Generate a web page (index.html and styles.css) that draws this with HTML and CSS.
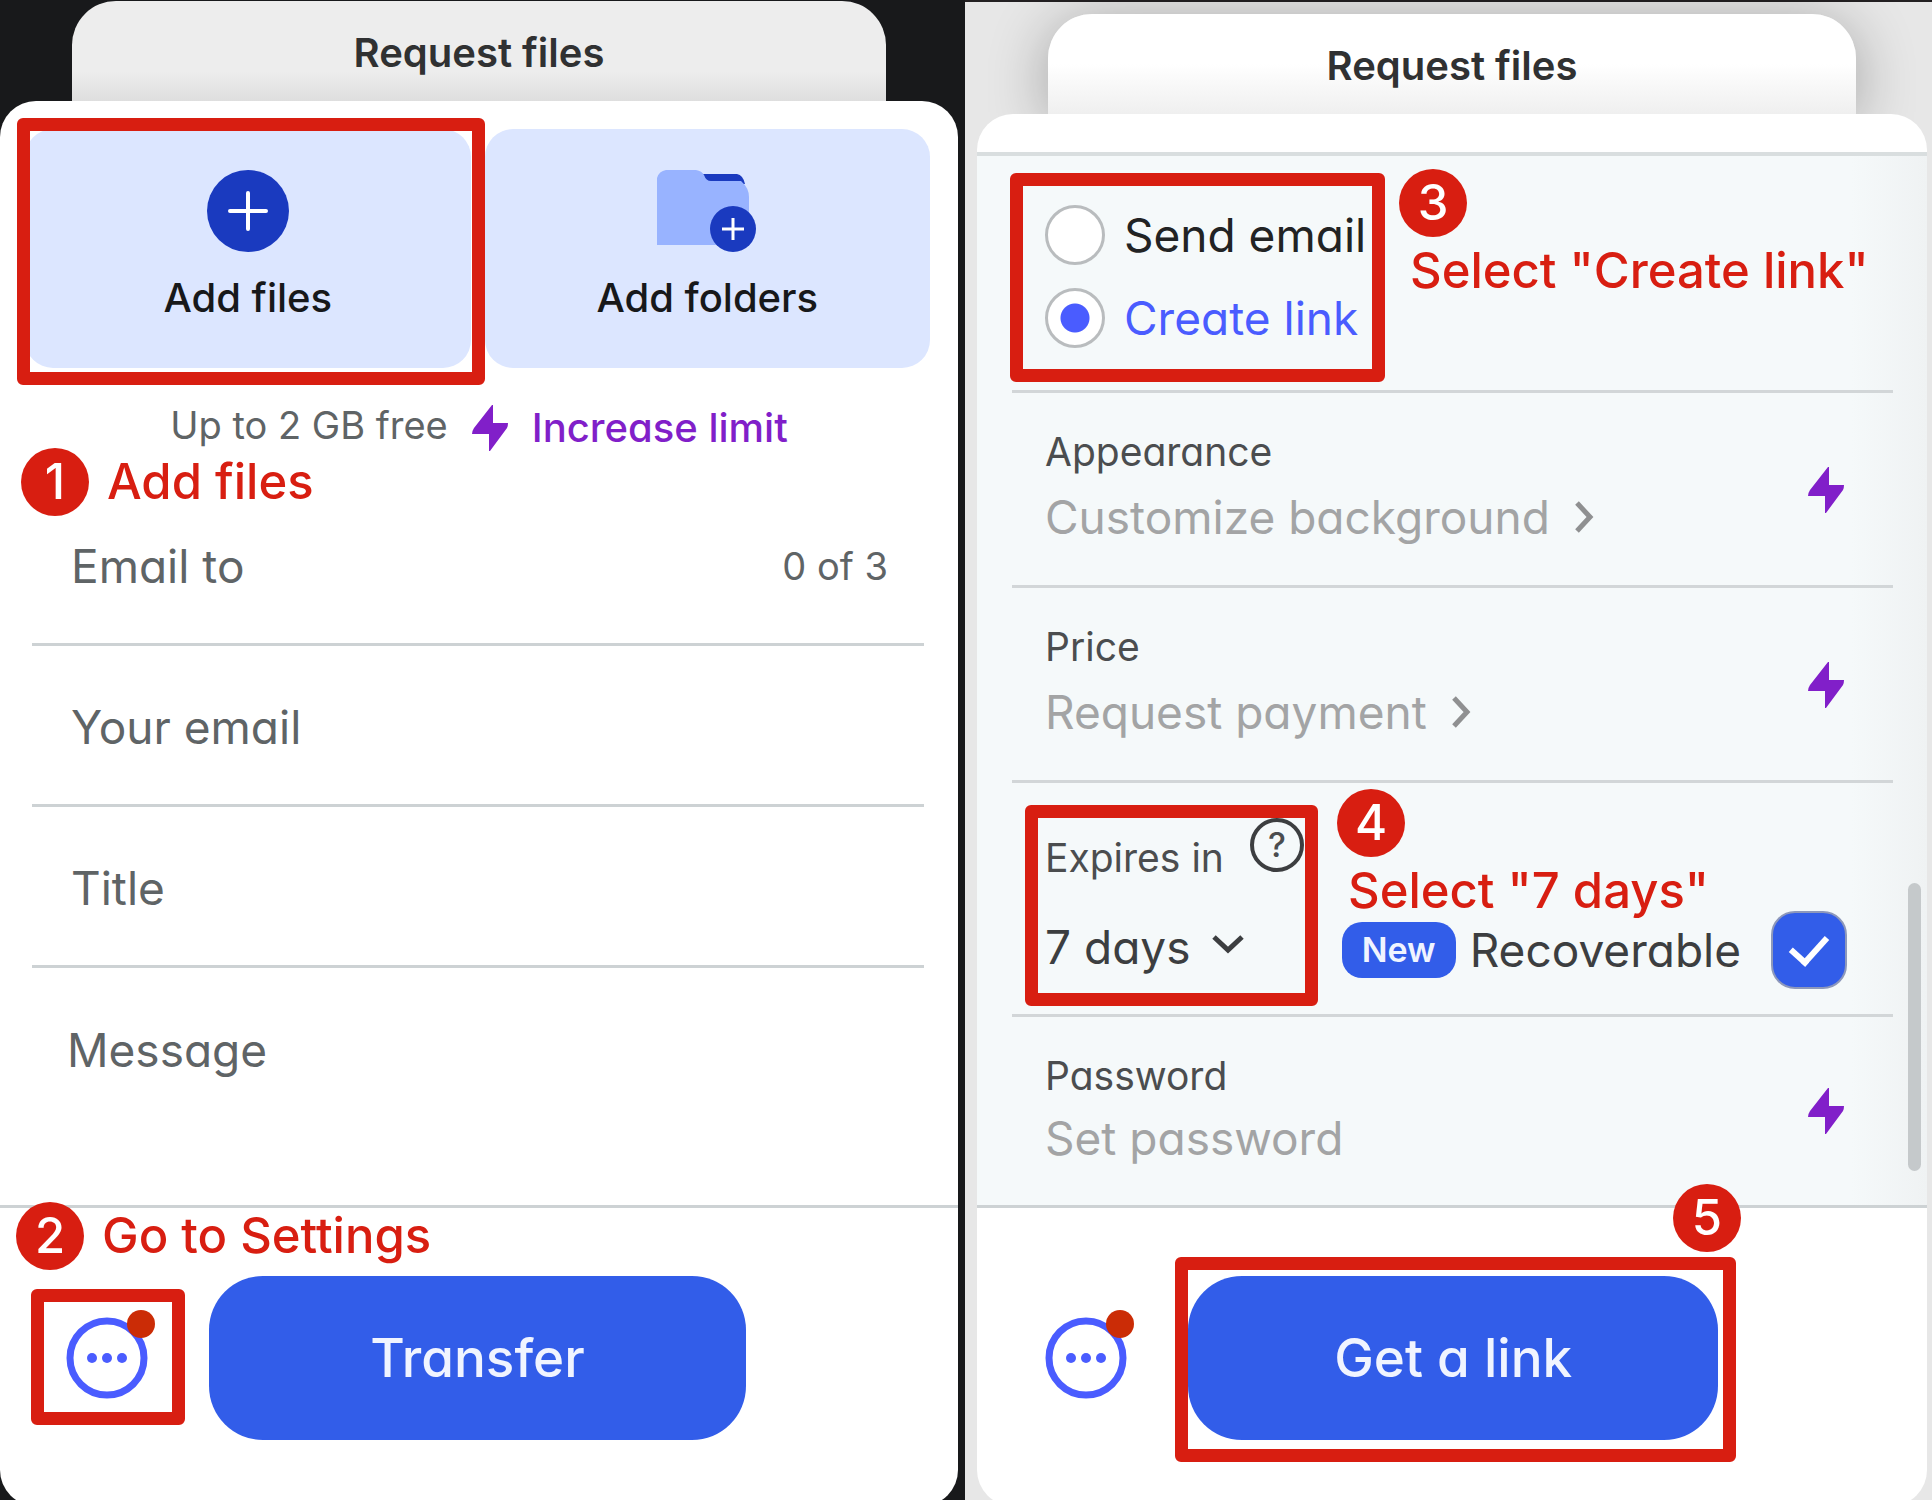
FILE: index.html
```html
<!DOCTYPE html>
<html lang="en">
<head>
  <meta charset="UTF-8" />
  <meta name="viewport" content="width=device-width, initial-scale=1" />
  <title>Request files</title>
  <link rel="stylesheet" href="styles.css">
</head>
<body>
  <svg class="sprite" aria-hidden="true">
    <symbol id="bolt" viewBox="0 0 36 46">
      <path d="M21 0 L21 18 L36 18 Q36 21 35 23 L18 46 L17 46 L17 29 L0 29 Q0 26 2 23 L20 0 Z" />
    </symbol>
    <symbol id="more" viewBox="0 0 82 82">
      <circle cx="41" cy="41" r="37" fill="none" stroke="currentColor" stroke-width="7" />
      <circle cx="26" cy="41" r="5" /><circle cx="41" cy="41" r="5" /><circle cx="56" cy="41" r="5" />
    </symbol>
    <symbol id="chevron" viewBox="0 0 20 34">
      <path d="M3 3 L16 17 L3 31" fill="none" stroke="currentColor" stroke-width="5" />
    </symbol>
  </svg>

  <main class="screens">
    <!-- Add files screen -->
    <section class="screen screen-dark">
      <h1 class="tab">Request files</h1>
      <div class="sheet">
        <div class="uploads">
          <button class="upload">
            <svg class="upload-icon" width="82" height="82" viewBox="0 0 82 82">
              <circle cx="41" cy="41" r="41" fill="#1a3abf" />
              <path d="M41 23 V59 M23 41 H59" stroke="#fff" stroke-width="4" stroke-linecap="round" />
            </svg>
            Add files
            <span class="highlight highlight-upload"></span>
          </button>
          <button class="upload">
            <svg class="upload-icon" width="100" height="82" viewBox="0 0 100 82">
              <path d="M44 4 H80 Q86 5 88 14 H50 Z" fill="#1a3abf" />
              <path d="M0 8 Q2 1 9 0 H39 Q45 1 47 5 Q49 11 54 11 H84 Q92 18 92 27 V75 H0 Z" fill="#98b3ff" />
              <circle cx="76" cy="59" r="23" fill="#1a3abf" />
              <path d="M76 48 V70 M65 59 H87" stroke="#fff" stroke-width="3" />
            </svg>
            Add folders
          </button>
        </div>

        <div class="limit">
          <span>Up to 2 GB free</span>
          <a href="#"><svg class="bolt"><use href="#bolt" /></svg>Increase limit</a>
          <div class="step step-1"><b>1</b><span>Add files</span></div>
        </div>

        <form class="fields">
          <div class="field">
            <input type="text" placeholder="Email to" aria-label="Email to">
            <span class="count">0 of 3</span>
          </div>
          <div class="field"><input type="email" placeholder="Your email" aria-label="Your email"></div>
          <div class="field"><input type="text" placeholder="Title" aria-label="Title"></div>
          <textarea placeholder="Message" aria-label="Message"></textarea>
        </form>

        <footer class="actions">
          <button class="more" aria-label="Settings">
            <svg><use href="#more" /></svg>
            <span class="dot"></span>
            <span class="highlight highlight-more"></span>
          </button>
          <button class="submit">Transfer</button>
          <div class="step step-2"><b>2</b><span>Go to Settings</span></div>
        </footer>
      </div>
    </section>

    <!-- Settings screen -->
    <section class="screen screen-light">
      <h1 class="tab">Request files</h1>
      <div class="sheet">
        <form class="settings">
          <div class="setting delivery">
            <label><input type="radio" name="delivery">Send email</label>
            <label><input type="radio" name="delivery" checked>Create link</label>
            <span class="highlight highlight-delivery"></span>
            <div class="step step-stacked step-3"><b>3</b><span>Select "Create link"</span></div>
          </div>
          <div class="setting">
            <div>
              <h2>Appearance</h2>
              <button type="button" class="value">Customize background<svg><use href="#chevron" /></svg></button>
            </div>
            <svg class="bolt"><use href="#bolt" /></svg>
          </div>
          <div class="setting">
            <div>
              <h2>Price</h2>
              <button type="button" class="value">Request payment<svg><use href="#chevron" /></svg></button>
            </div>
            <svg class="bolt"><use href="#bolt" /></svg>
          </div>
          <div class="setting expiry">
            <div>
              <div class="expiry-label">
                <label for="expires">Expires in</label>
                <span class="help">?</span>
              </div>
              <div class="picker">
                <select id="expires">
                  <option>7 days</option>
                </select>
                <svg viewBox="0 0 34 22"><path d="M3 4 L17 17 L31 4" /></svg>
              </div>
            </div>
            <div class="recoverable">
              <span class="new">New</span>
              <label for="recoverable">Recoverable</label>
              <input type="checkbox" id="recoverable" checked>
            </div>
            <span class="highlight highlight-expiry"></span>
            <div class="step step-stacked step-4"><b>4</b><span>Select "7 days"</span></div>
          </div>
          <div class="setting password">
            <div>
              <h2><label for="password">Password</label></h2>
              <input type="password" id="password" placeholder="Set password">
            </div>
            <svg class="bolt"><use href="#bolt" /></svg>
          </div>
          <span class="scrollbar"></span>
        </form>

        <footer class="actions">
          <button class="more" aria-label="Settings">
            <svg><use href="#more" /></svg>
            <span class="dot"></span>
          </button>
          <button class="submit">Get a link<span class="highlight highlight-submit"></span></button>
          <div class="step step-5"><b>5</b></div>
        </footer>
      </div>
    </section>
  </main>
</body>
</html>
```
FILE: styles.css
```css
* {
  box-sizing: border-box;
}

body {
  margin: 0;
  background: #18191b;
  font-family: Inter, "Liberation Sans", sans-serif;
  font-feature-settings: "cv11";
  font-size: 46px;
  color: #5f6466;
}

button, input, select, textarea {
  font: inherit;
  font-feature-settings: inherit;
  color: inherit;
  background: none;
  border: 0;
  margin: 0;
  padding: 0;
}

button {
  cursor: pointer;
}

::placeholder {
  color: inherit;
  opacity: 1;
}

h1, h2 {
  margin: 0;
}

.sprite {
  position: absolute;
  width: 0;
  height: 0;
}

.screens {
  display: grid;
  grid-template-columns: 958fr 967fr;
  column-gap: 7px;
  min-height: 100vh;
  overflow: hidden;
}

.screen {
  display: flex;
  flex-direction: column;
}

.tab {
  width: 85%;
  height: 100px;
  margin: 0 auto;
  border-radius: 44px 44px 0 0;
  font-size: 40px;
  font-weight: 600;
  line-height: 104px;
  text-align: center;
  color: #303132;
}

.screen-dark {
  padding-top: 1px;
}

.screen-dark .tab {
  background: linear-gradient(#ededed 70%, #dedede);
}

.screen-light {
  padding: 12px 5px 0 12px;
  background: #e7e7e7;
  border-top: 2px solid #232022;
}

.screen-light .tab {
  background: linear-gradient(#fff 50%, #efefef);
  box-shadow: 0 8px 60px rgba(0, 0, 0, 0.3);
}

.sheet {
  position: relative;
  flex: 1;
  display: flex;
  flex-direction: column;
  margin-bottom: -6px;
  background: #fff;
  border-radius: 36px;
}

/* upload cards */
.uploads {
  display: grid;
  grid-template-columns: 1fr 1fr;
  gap: 14px;
  padding: 28px 28px 0 25px;
}

.upload {
  position: relative;
  display: flex;
  flex-direction: column;
  align-items: center;
  gap: 16px;
  height: 239px;
  padding-top: 41px;
  background: #dce6ff;
  border-radius: 28px;
  font-size: 40px;
  font-weight: 500;
  line-height: 60px;
  color: #17181a;
}

.limit {
  position: relative;
  display: flex;
  justify-content: center;
  align-items: flex-start;
  gap: 24px;
  height: 117px;
  padding-top: 28px;
  font-size: 38px;
  line-height: 58px;
}

.limit a {
  display: flex;
  align-items: center;
  gap: 24px;
  font-size: 40px;
  font-weight: 500;
  line-height: 64px;
  color: #811fc9;
  text-decoration: none;
}

.bolt {
  flex: none;
  width: 36px;
  height: 46px;
  fill: #811fc9;
}

/* form fields */
.fields {
  flex: 1;
  display: flex;
  flex-direction: column;
  padding: 0 34px 0 32px;
}

.field {
  display: flex;
  align-items: center;
  height: 161px;
  padding: 4px 36px 0 39px;
  border-bottom: 3px solid #cdd2d4;
}

.field input {
  flex: 1;
  min-width: 0;
}

.count {
  font-size: 38px;
}

textarea {
  flex: 1;
  padding: 54px 35px;
  resize: none;
}

/* bottom bar */
.actions {
  position: relative;
  display: flex;
  align-items: center;
  height: 301px;
  padding: 68px 66px 66px;
  border-top: 3px solid #cdd2d4;
}

.more {
  position: relative;
  width: 82px;
  height: 82px;
  color: #4a5cff;
}

.more svg {
  display: block;
  width: 82px;
  height: 82px;
  fill: currentColor;
}

.dot {
  position: absolute;
  top: -7px;
  right: -7px;
  width: 28px;
  height: 28px;
  border-radius: 50%;
  background: #cb2c06;
}

.submit {
  position: relative;
  width: 65%;
  height: 164px;
  margin-left: 61px;
  border-radius: 54px;
  background: #325de9;
  font-size: 53px;
  font-weight: 500;
  color: #f0f4ff;
}

/* settings */
.screen-light .sheet {
  padding-top: 38px;
}

.settings {
  position: relative;
  flex: 1;
  padding: 0 34px 0 35px;
  background: linear-gradient(90deg, #f5f9fa 92%, #eff2f3);
  border-top: 4px solid #d9dedf;
}

.setting {
  position: relative;
  display: flex;
  align-items: center;
  justify-content: space-between;
  height: 195px;
  padding: 2px 49px 0 33px;
  border-bottom: 3px solid #d2d6d8;
}

.delivery {
  flex-direction: column;
  align-items: flex-start;
  justify-content: flex-start;
  gap: 23px;
  height: 237px;
  padding-top: 49px;
}

.delivery label {
  display: flex;
  align-items: center;
  gap: 19px;
  height: 60px;
  color: #222324;
}

.delivery label:has(:checked) {
  color: #4a5cff;
}

.delivery input {
  appearance: none;
  width: 60px;
  height: 60px;
  border: 3px solid #b9bcbe;
  border-radius: 50%;
  background: #fff;
}

.delivery input:checked {
  background: radial-gradient(circle, #4a5cff 14px, #fff 15px);
}

.setting h2, .expiry-label {
  font-size: 39px;
  font-weight: 400;
  line-height: 54px;
  color: #4b4d4f;
}

.value {
  display: flex;
  align-items: center;
  gap: 24px;
  height: 76px;
  color: #a3a4a5;
}

.value svg {
  width: 20px;
  height: 34px;
  color: #8f9091;
}

.expiry {
  align-items: flex-start;
  height: 234px;
  padding-top: 48px;
  padding-right: 46px;
}

.expiry-label {
  display: flex;
  gap: 26px;
}

.help {
  width: 54px;
  height: 54px;
  margin-top: -13px;
  border: 4px solid #3c3e40;
  border-radius: 50%;
  font-size: 34px;
  font-weight: 500;
  line-height: 46px;
  text-align: center;
}

.picker {
  position: relative;
  display: inline-block;
  margin-top: 34px;
  color: #3c3e40;
}

.picker select {
  appearance: none;
  padding-right: 54px;
}

.picker svg {
  position: absolute;
  top: 14px;
  right: 0;
  width: 34px;
  height: 22px;
  fill: none;
  stroke: currentColor;
  stroke-width: 5;
  pointer-events: none;
}

.recoverable {
  display: flex;
  align-items: center;
  align-self: flex-end;
  margin-bottom: 25px;
  color: #3c3e40;
}

.new {
  padding: 0 20px;
  margin-right: 14px;
  border-radius: 20px;
  background: #325de9;
  font-size: 34px;
  font-weight: 600;
  line-height: 56px;
  color: #f0f4ff;
}

.recoverable input {
  appearance: none;
  width: 76px;
  height: 78px;
  margin-left: 30px;
  border: 2px solid #8d98bb;
  border-radius: 24px;
  background: #325de9;
  display: grid;
  place-items: center;
}

.recoverable input:checked::after {
  content: "";
  width: 16px;
  height: 30px;
  margin-bottom: 8px;
  border: solid #fff;
  border-width: 0 6px 6px 0;
  transform: rotate(42deg);
}

.password {
  height: 188px;
  padding-top: 0;
  border-bottom: 0;
}

.password input {
  display: block;
  width: 100%;
  height: 70px;
}

.password ::placeholder {
  color: #a3a4a5;
}

.scrollbar {
  position: absolute;
  right: 6px;
  bottom: 34px;
  width: 13px;
  height: 288px;
  border-radius: 7px;
  background: #c5c9cb;
}

.screen-light .actions {
  padding-left: 68px;
}

/* callouts drawn over the screens */
.highlight {
  position: absolute;
  border: 13px solid #d81e11;
  border-radius: 6px;
  pointer-events: none;
}

.highlight-upload {
  inset: -11px -14px -17px -8px;
}

.highlight-more {
  inset: -28px -37px -26px -35px;
}

.highlight-delivery {
  top: 17px;
  left: -2px;
  width: 375px;
  height: 209px;
}

.highlight-expiry {
  top: 22px;
  left: 13px;
  width: 293px;
  height: 201px;
}

.highlight-submit {
  inset: -19px -18px -22px -13px;
}

.step {
  position: absolute;
  display: flex;
  align-items: center;
  gap: 18px;
  font-size: 49px;
  font-weight: 500;
  line-height: 68px;
  font-feature-settings: normal;
  white-space: nowrap;
  color: #d81e11;
}

.step b {
  width: 68px;
  height: 68px;
  border-radius: 50%;
  background: #d81e11;
  font-weight: 500;
  text-align: center;
  color: #fff;
}

.step-stacked {
  flex-direction: column;
  align-items: flex-start;
  gap: 0;
}

.step-stacked span {
  padding-left: 11px;
}

.step-1 {
  top: 80px;
  left: 21px;
}

.step-2 {
  top: -6px;
  left: 16px;
}

.step-3 {
  top: 13px;
  left: 387px;
}

.step-4 {
  top: 6px;
  left: 325px;
}

.step-5 {
  top: -24px;
  left: 696px;
}
```
